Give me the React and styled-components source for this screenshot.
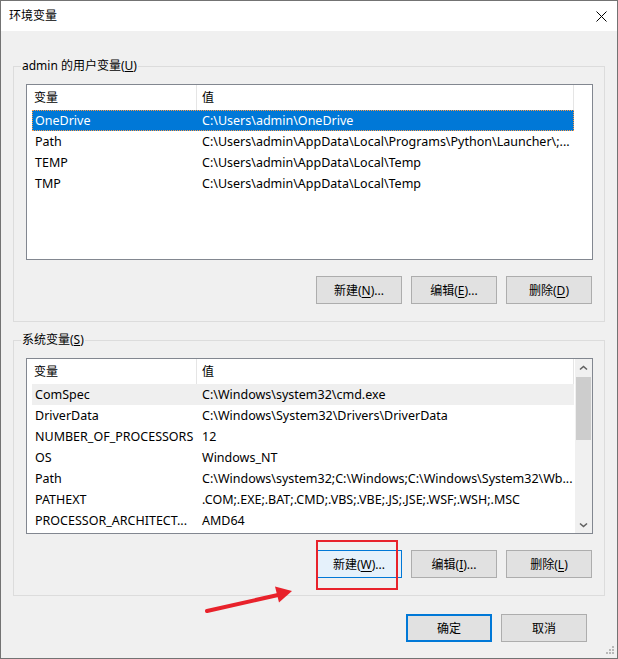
import React from "react";
import styled, { createGlobalStyle, css } from "styled-components";

const GlobalStyle = createGlobalStyle`
  html, body {
    margin: 0;
    padding: 0;
    background: #f0f0f0;
  }
  body {
    font-family: "Noto Sans", "Noto Sans CJK SC", sans-serif;
    font-size: 12px;
    color: #000;
  }
`;

const Window = styled.div`
  position: relative;
  box-sizing: border-box;
  width: 618px;
  height: 659px;
  border: 1px solid #737373;
  background: #f0f0f0;
  display: flex;
  flex-direction: column;
  overflow: hidden;
`;

const TitleBar = styled.div`
  height: 30px;
  flex: 0 0 30px;
  background: #fff;
  display: flex;
  align-items: center;
  justify-content: space-between;
  padding: 0 10px 0 8px;
`;

const TitleText = styled.span`
  font-size: 12px;
  line-height: 16px;
`;

const Body = styled.div`
  flex: 1;
  display: flex;
  flex-direction: column;
  padding: 27px 12px 0;
`;

const Group = styled.fieldset`
  margin: ${(p) => (p.$first ? "0" : "10px 0 0")};
  padding: 10px 11px 17px 7px;
  border: 1px solid #dcdcdc;
  min-width: 0;
`;

const Legend = styled.legend`
  padding: 0 1px;
  line-height: 16px;
  font-size: 12px;
`;

const ListBox = styled.div`
  margin-left: 5px;
  height: 176px;
  box-sizing: border-box;
  border: 1px solid #828790;
  background: #fff;
  display: flex;
  overflow: hidden;
`;

const ListMain = styled.div`
  flex: 1;
  min-width: 0;
  display: flex;
  flex-direction: column;
`;

const Header = styled.div`
  display: flex;
  height: 25px;
  flex: 0 0 25px;
`;

const HeaderCell = styled.div`
  box-sizing: border-box;
  width: ${(p) => p.$w}px;
  padding-left: ${(p) => p.$pad}px;
  border-right: 1px solid #e5e5e5;
  line-height: 25px;
  white-space: nowrap;
`;

const Rows = styled.div`
  padding-left: 5px;
`;

const Row = styled.div`
  display: flex;
  width: 542px;
  height: 21px;
  box-sizing: border-box;
  line-height: 21px;
  font-size: 12.5px;

  ${(p) =>
    p.$selected &&
    css`
      background: #0078d7;
      color: #fff;
      outline: 1px dotted #ff9b45;
      outline-offset: -1px;
    `};

  ${(p) =>
    p.$hover &&
    css`
      background: #efefef;
    `};
`;

const Cell = styled.div`
  box-sizing: border-box;
  width: ${(p) => p.$w}px;
  padding-left: ${(p) => p.$pad}px;
  white-space: nowrap;
  overflow: hidden;
  text-overflow: ellipsis;
`;

const ScrollBar = styled.div`
  width: 17px;
  flex: 0 0 17px;
  background: #f0f0f0;
  display: flex;
  flex-direction: column;
`;

const ScrollArrow = styled.div`
  height: 17px;
  flex: 0 0 17px;
  display: flex;
  align-items: center;
  justify-content: center;
`;

const ScrollTrack = styled.div`
  flex: 1;
  padding: 1px 1px 0;
`;

const ScrollThumb = styled.div`
  height: 63px;
  background: #cdcdcd;
`;

const ButtonRow = styled.div`
  display: flex;
  justify-content: flex-end;
  gap: 9px;
  margin-top: 16px;
  padding-right: 1px;
`;

const Footer = styled.div`
  display: flex;
  justify-content: flex-end;
  gap: 9px;
  margin-top: 18px;
  padding-right: 18px;
`;

const Button = styled.button`
  box-sizing: border-box;
  width: 86px;
  height: 28px;
  padding: 0;
  font-family: inherit;
  font-size: 12px;
  color: #000;
  background: #e1e1e1;
  border: 1px solid #adadad;
  border-radius: 0;

  ${(p) =>
    p.$hover &&
    css`
      background: #e5f1fb;
      border-color: #0078d7;
    `};

  ${(p) =>
    p.$primary &&
    css`
      border: 2px solid #0078d7;
    `};

  u {
    text-decoration-thickness: 1px;
    text-underline-offset: 2px;
  }
`;

const Overlay = styled.svg`
  position: absolute;
  left: -1px;
  top: -1px;
  pointer-events: none;
`;

const Grip = styled.svg`
  position: absolute;
  right: 2px;
  bottom: 2px;
`;

const userVars = [
  ["OneDrive", "C:\\Users\\admin\\OneDrive"],
  ["Path", "C:\\Users\\admin\\AppData\\Local\\Programs\\Python\\Launcher\\;..."],
  ["TEMP", "C:\\Users\\admin\\AppData\\Local\\Temp"],
  ["TMP", "C:\\Users\\admin\\AppData\\Local\\Temp"],
];

const systemVars = [
  ["ComSpec", "C:\\Windows\\system32\\cmd.exe"],
  ["DriverData", "C:\\Windows\\System32\\Drivers\\DriverData"],
  ["NUMBER_OF_PROCESSORS", "12"],
  ["OS", "Windows_NT"],
  ["Path", "C:\\Windows\\system32;C:\\Windows;C:\\Windows\\System32\\Wb..."],
  ["PATHEXT", ".COM;.EXE;.BAT;.CMD;.VBS;.VBE;.JS;.JSE;.WSF;.WSH;.MSC"],
  ["PROCESSOR_ARCHITECT...", "AMD64"],
];

const Chevron = ({ down }) => (
  <svg width="9" height="6" viewBox="0 0 9 6">
    <path
      d={down ? "M1 1.5 L4.5 4.5 L8 1.5" : "M1 4.5 L4.5 1.5 L8 4.5"}
      fill="none"
      stroke="#606060"
      strokeWidth="1.6"
    />
  </svg>
);

const VarList = ({ items, selected, hover, scroll }) => (
  <ListBox>
    <ListMain>
      <Header>
        <HeaderCell $w={170} $pad={7}>变量</HeaderCell>
        <HeaderCell $w={377} $pad={5}>值</HeaderCell>
      </Header>
      <Rows>
        {items.map(([name, value], i) => (
          <Row key={name} $selected={i === selected} $hover={i === hover}>
            <Cell $w={165} $pad={3}>{name}</Cell>
            <Cell $w={377} $pad={5}>{value}</Cell>
          </Row>
        ))}
      </Rows>
    </ListMain>
    {scroll && (
      <ScrollBar>
        <ScrollArrow>
          <Chevron />
        </ScrollArrow>
        <ScrollTrack>
          <ScrollThumb />
        </ScrollTrack>
        <ScrollArrow>
          <Chevron down />
        </ScrollArrow>
      </ScrollBar>
    )}
  </ListBox>
);

const App = () => {
  return (
    <>
      <GlobalStyle />
      <Window>
        <TitleBar>
          <TitleText>环境变量</TitleText>
          <svg width="11" height="11" viewBox="0 0 11 11">
            <path d="M0.5 0.5 L10.5 10.5 M10.5 0.5 L0.5 10.5" stroke="#000" strokeWidth="1" />
          </svg>
        </TitleBar>

        <Body>
          <Group $first>
            <Legend>
              admin 的用户变量(<u>U</u>)
            </Legend>
            <VarList items={userVars} selected={0} />
            <ButtonRow>
              <Button>
                新建(<u>N</u>)...
              </Button>
              <Button>
                编辑(<u>E</u>)...
              </Button>
              <Button>
                删除(<u>D</u>)
              </Button>
            </ButtonRow>
          </Group>

          <Group>
            <Legend>
              系统变量(<u>S</u>)
            </Legend>
            <VarList items={systemVars} hover={0} scroll />
            <ButtonRow>
              <Button $hover>
                新建(<u>W</u>)...
              </Button>
              <Button>
                编辑(<u>I</u>)...
              </Button>
              <Button>
                删除(<u>L</u>)
              </Button>
            </ButtonRow>
          </Group>

          <Footer>
            <Button $primary>确定</Button>
            <Button>取消</Button>
          </Footer>
        </Body>

        <Overlay width="618" height="659" viewBox="0 0 618 659">
          <rect x="317" y="541" width="80" height="48" fill="none" stroke="#e8222b" strokeWidth="2" />
          <line x1="207" y1="611" x2="278" y2="595" stroke="#e8222b" strokeWidth="4" strokeLinecap="round" />
          <polygon points="292,591 275,586.5 279,602.5" fill="#e8222b" />
        </Overlay>

        <Grip width="10" height="10" viewBox="0 0 10 10">
          <rect x="7" y="0" width="2" height="2" fill="#b8b8b8" />
          <rect x="4" y="3" width="2" height="2" fill="#b8b8b8" />
          <rect x="7" y="3" width="2" height="2" fill="#b8b8b8" />
          <rect x="1" y="6" width="2" height="2" fill="#b8b8b8" />
          <rect x="4" y="6" width="2" height="2" fill="#b8b8b8" />
          <rect x="7" y="6" width="2" height="2" fill="#b8b8b8" />
        </Grip>
      </Window>
    </>
  );
};

export default App;
